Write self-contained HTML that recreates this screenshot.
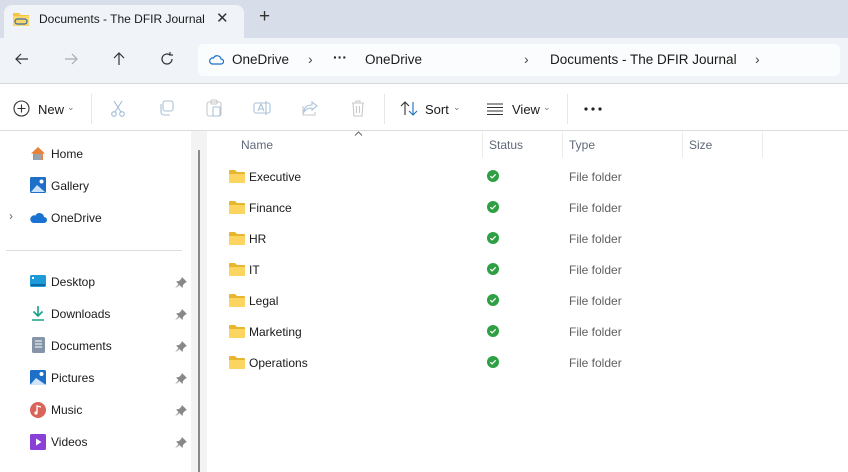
<!DOCTYPE html>
<html><head><meta charset="utf-8"><style>
*{margin:0;padding:0;box-sizing:border-box}
body{width:848px;height:472px;overflow:hidden;background:#fff;font-family:"Segoe UI","Liberation Sans",sans-serif;font-size:12px;color:#1a1a1a;position:relative}
.abs{position:absolute}
.tabs{left:0;top:0;width:848px;height:38px;background:#d8dee9}
.tab{left:4px;top:5px;width:240px;height:34px;background:#f0f3f8;border-radius:8px 8px 0 0}
.addr{left:0;top:38px;width:848px;height:46px;background:#f0f3f8;border-bottom:1px solid #d8d8d8}
.box{left:198px;top:44px;width:642px;height:32px;background:#fbfcfd;border-radius:5px}
.t{position:absolute;white-space:nowrap}
.sep{position:absolute;width:1px;background:#e6e6e6}
.hd{color:#606878;font-size:12px}
.gray{color:#5f5f5f}
.pin{position:absolute;left:175px}
</style></head><body>
<div class="abs tabs"></div>
<div class="abs tab"></div>
<svg class="abs" style="left:12px;top:11px" width="18" height="16" viewBox="0 0 18 16"><path d="M1 2h6l2 2h8v11H1z" fill="#f3c744"/><path d="M1 5h16v10H1z" fill="#fad66b"/><rect x="3" y="8" width="12" height="5" rx="2.5" fill="none" stroke="#3b6ea8" stroke-width="1.2"/></svg>
<div class="t" style="left:39px;top:12px;font-size:12px">Documents - The DFIR Journal</div>
<div class="t" style="left:216px;top:9px;font-size:15px;color:#333">✕</div>
<div class="t" style="left:259px;top:6px;font-size:19px;color:#333">+</div>
<div class="abs addr"></div>
<div class="abs box"></div>
<svg class="abs" style="left:14px;top:51px" width="16" height="16" viewBox="0 0 16 16" fill="none" stroke="#333" stroke-width="1.2"><path d="M14 8H2M7 3L2 8l5 5"/></svg>
<svg class="abs" style="left:63px;top:51px" width="16" height="16" viewBox="0 0 16 16" fill="none" stroke="#aaa" stroke-width="1.2"><path d="M2 8h12M9 3l5 5-5 5"/></svg>
<svg class="abs" style="left:111px;top:51px" width="16" height="16" viewBox="0 0 16 16" fill="none" stroke="#333" stroke-width="1.2"><path d="M8 14V2M3 7l5-5 5 5"/></svg>
<svg class="abs" style="left:159px;top:51px" width="16" height="16" viewBox="0 0 16 16" fill="none" stroke="#333" stroke-width="1.2"><path d="M13 8a5 5 0 1 1-2-4M11 1v3h3"/></svg>
<svg class="abs" style="left:208px;top:53px" width="16" height="12" viewBox="0 0 16 12" fill="none" stroke="#1a6fc4" stroke-width="1.2"><path d="M4 11h9a2.5 2.5 0 0 0 0-5 4 4 0 0 0-7.5-1A3 3 0 0 0 4 11z"/></svg>
<div class="t" style="left:232px;top:52px;font-size:13.5px">OneDrive</div>
<div class="t" style="left:308px;top:51px;font-size:14px;color:#444">›</div>
<div class="t" style="left:333px;top:49px;font-size:14px;font-weight:bold">···</div>
<div class="t" style="left:365px;top:52px;font-size:13.5px">OneDrive</div>
<div class="t" style="left:524px;top:51px;font-size:14px;color:#444">›</div>
<div class="t" style="left:550px;top:52px;font-size:13.5px">Documents - The DFIR Journal</div>
<div class="t" style="left:755px;top:51px;font-size:14px;color:#444">›</div>
<svg class="abs" style="left:13px;top:100px" width="17" height="17" viewBox="0 0 17 17" fill="none" stroke="#333" stroke-width="1.1"><circle cx="8.5" cy="8.5" r="7.5"/><path d="M8.5 4.5v8M4.5 8.5h8"/></svg>
<div class="t" style="left:38px;top:102px;font-size:13px">New</div>
<div class="t" style="left:67px;top:102px;font-size:9px;color:#777">⌄</div>
<div class="sep" style="left:91px;top:94px;height:30px"></div>
<svg class="abs" style="left:110px;top:100px" width="16" height="17" viewBox="0 0 16 17" fill="none" stroke="#9fbbd6" stroke-width="1.1"><circle cx="4" cy="14" r="2.3"/><circle cx="12" cy="14" r="2.3"/><path d="M5 12L12 1M11 12L4 1"/></svg>
<svg class="abs" style="left:158px;top:100px" width="16" height="16" viewBox="0 0 16 16" fill="none" stroke="#aac2da" stroke-width="1.1"><rect x="5" y="1" width="10" height="10" rx="2"/><path d="M3 4v8a3 3 0 0 0 3 3h6"/></svg>
<svg class="abs" style="left:206px;top:99px" width="16" height="18" viewBox="0 0 16 18" fill="none" stroke="#c8c8c8" stroke-width="1.1"><rect x="1" y="3" width="14" height="14" rx="2"/><rect x="5" y="1" width="6" height="4" rx="1"/><rect x="7" y="8" width="7" height="9" rx="1" stroke="#aac2da"/></svg>
<svg class="abs" style="left:253px;top:100px" width="18" height="16" viewBox="0 0 18 16" fill="none" stroke="#aac2da" stroke-width="1.1"><rect x="1" y="3" width="16" height="10" rx="2"/><path d="M5 11l3-7 3 7M6 9h4M13 1v14"/></svg>
<svg class="abs" style="left:302px;top:100px" width="16" height="16" viewBox="0 0 16 16" fill="none" stroke="#aac2da" stroke-width="1.1"><path d="M10 2l5 4-5 4V8c-4 0-6 1-8 4 0-5 3-7 8-7z"/><path d="M1 6v9h12v-3" stroke="#c8c8c8"/></svg>
<svg class="abs" style="left:351px;top:100px" width="14" height="17" viewBox="0 0 14 17" fill="none" stroke="#c8c8c8" stroke-width="1.1"><path d="M1 3h12M5 3V1h4v2M2 3l1 13h8l1-13M5.5 6v7M8.5 6v7"/></svg>
<div class="sep" style="left:384px;top:94px;height:30px"></div>
<svg class="abs" style="left:400px;top:101px" width="18" height="15" viewBox="0 0 18 15" fill="none" stroke-width="1.1"><path d="M5 14V1M1 5l4-4 4 4" stroke="#333"/><path d="M13 1v13M9 10l4 4 4-4" stroke="#1a6fc4"/></svg>
<div class="t" style="left:425px;top:102px;font-size:13px">Sort</div>
<div class="t" style="left:453px;top:102px;font-size:9px;color:#777">⌄</div>
<svg class="abs" style="left:487px;top:103px" width="16" height="12" viewBox="0 0 16 12" stroke="#333" stroke-width="1"><path d="M0 1h16M0 4.5h16M0 8h16M0 11.5h16"/></svg>
<div class="t" style="left:512px;top:102px;font-size:13px">View</div>
<div class="t" style="left:543px;top:102px;font-size:9px;color:#777">⌄</div>
<div class="sep" style="left:567px;top:94px;height:30px"></div>
<svg class="abs" style="left:584px;top:107px" width="18" height="4" viewBox="0 0 18 4" fill="#222"><circle cx="2" cy="2" r="1.6"/><circle cx="9" cy="2" r="1.6"/><circle cx="16" cy="2" r="1.6"/></svg>
<div class="abs" style="left:0;top:130px;width:848px;height:1px;background:#dcdcdc"></div>
<div class="abs" style="left:191px;top:131px;width:16px;height:341px;background:#f3f3f3"></div>
<div class="abs" style="left:198px;top:150px;width:2px;height:322px;background:#8a8a8a"></div>
<div class="abs" style="left:6px;top:250px;width:176px;height:1px;background:#dcdcdc"></div>
<svg class="abs" style="left:30px;top:146px" width="16" height="15" viewBox="0 0 16 15"><path d="M8 1L1 7.5h2V14h10V7.5h2z" fill="#e8823a"/><path d="M4 8h8v6H4z" fill="#9aa3ad"/></svg>
<div class="t" style="left:51px;top:147px">Home</div>
<svg class="abs" style="left:30px;top:177px" width="16" height="16" viewBox="0 0 16 16"><rect x="0" y="0" width="16" height="16" rx="1.5" fill="#1d6fc8"/><path d="M1 15l6-7 8 7z" fill="#c9e2fa"/><circle cx="11.5" cy="4.5" r="2" fill="#fff"/></svg>
<div class="t" style="left:51px;top:179px">Gallery</div>
<div class="t" style="left:9px;top:209px;color:#666">›</div>
<svg class="abs" style="left:30px;top:212px" width="17" height="11" viewBox="0 0 17 11"><path d="M3 11h11a3 3 0 0 0 0-6 4.5 4.5 0 0 0-8.5-1.5A3.5 3.5 0 0 0 3 11z" fill="#1a73d0"/></svg>
<div class="t" style="left:51px;top:211px">OneDrive</div>
<svg class="abs" style="left:30px;top:275px" width="16" height="13" viewBox="0 0 16 13"><rect width="16" height="12" rx="1.5" fill="#1f9ad9"/><rect x="1" y="9" width="14" height="2" fill="#0e6aa6"/><rect x="2" y="2" width="2" height="2" fill="#fff"/></svg>
<div class="t" style="left:51px;top:275px">Desktop</div>
<svg class="abs" style="left:31px;top:305px" width="14" height="16" viewBox="0 0 14 16" fill="none" stroke="#16a085" stroke-width="1.6"><path d="M7 1v10M2.5 6.5L7 11l4.5-4.5M1 15h12"/></svg>
<div class="t" style="left:51px;top:307px">Downloads</div>
<svg class="abs" style="left:32px;top:337px" width="13" height="16" viewBox="0 0 13 16"><rect width="13" height="16" rx="1.5" fill="#8694a8"/><path d="M3 4h7M3 7h7M3 10h7" stroke="#fff" stroke-width="1"/></svg>
<div class="t" style="left:51px;top:339px">Documents</div>
<svg class="abs" style="left:30px;top:370px" width="16" height="15" viewBox="0 0 16 15"><rect width="16" height="15" rx="1.5" fill="#1d6fc8"/><path d="M0 15l6-7 10 7z" fill="#cfe5fb"/><circle cx="11.5" cy="4" r="2" fill="#fff"/></svg>
<div class="t" style="left:51px;top:371px">Pictures</div>
<svg class="abs" style="left:30px;top:402px" width="16" height="16" viewBox="0 0 16 16"><circle cx="8" cy="8" r="8" fill="#d9655a"/><path d="M7 11V4l4 1" stroke="#fff" stroke-width="1.3" fill="none"/><circle cx="6" cy="11" r="1.6" fill="#fff"/></svg>
<div class="t" style="left:51px;top:403px">Music</div>
<svg class="abs" style="left:30px;top:434px" width="16" height="16" viewBox="0 0 16 16"><rect width="16" height="16" rx="1.5" fill="#8a3fd6"/><path d="M6 4.5v7l5.5-3.5z" fill="#fff"/></svg>
<div class="t" style="left:51px;top:435px">Videos</div>
<svg class="pin" style="top:277px" width="12" height="12" viewBox="0 0 12 12" fill="#888"><path d="M7 0l5 5-1.5.5L8 8l-.5 3L1 4.5l3-.5L6.5 1.5z M3.5 7L0 11.5 4.5 8z"/></svg>
<svg class="pin" style="top:309px" width="12" height="12" viewBox="0 0 12 12" fill="#888"><path d="M7 0l5 5-1.5.5L8 8l-.5 3L1 4.5l3-.5L6.5 1.5z M3.5 7L0 11.5 4.5 8z"/></svg>
<svg class="pin" style="top:341px" width="12" height="12" viewBox="0 0 12 12" fill="#888"><path d="M7 0l5 5-1.5.5L8 8l-.5 3L1 4.5l3-.5L6.5 1.5z M3.5 7L0 11.5 4.5 8z"/></svg>
<svg class="pin" style="top:373px" width="12" height="12" viewBox="0 0 12 12" fill="#888"><path d="M7 0l5 5-1.5.5L8 8l-.5 3L1 4.5l3-.5L6.5 1.5z M3.5 7L0 11.5 4.5 8z"/></svg>
<svg class="pin" style="top:405px" width="12" height="12" viewBox="0 0 12 12" fill="#888"><path d="M7 0l5 5-1.5.5L8 8l-.5 3L1 4.5l3-.5L6.5 1.5z M3.5 7L0 11.5 4.5 8z"/></svg>
<svg class="pin" style="top:437px" width="12" height="12" viewBox="0 0 12 12" fill="#888"><path d="M7 0l5 5-1.5.5L8 8l-.5 3L1 4.5l3-.5L6.5 1.5z M3.5 7L0 11.5 4.5 8z"/></svg>
<div class="t hd" style="left:241px;top:138px">Name</div>
<svg class="abs" style="left:354px;top:131px" width="9" height="5" viewBox="0 0 9 5" fill="none" stroke="#666"><path d="M1 4.5L4.5 1 8 4.5"/></svg>
<div class="sep" style="left:482px;top:132px;height:26px;background:#ececec"></div>
<div class="t hd" style="left:489px;top:138px">Status</div>
<div class="sep" style="left:562px;top:132px;height:26px;background:#ececec"></div>
<div class="t hd" style="left:569px;top:138px">Type</div>
<div class="sep" style="left:682px;top:132px;height:26px;background:#ececec"></div>
<div class="t hd" style="left:689px;top:138px">Size</div>
<div class="sep" style="left:762px;top:132px;height:26px;background:#ececec"></div>
<div id="rows"></div>
<script>
var n=["Executive","Finance","HR","IT","Legal","Marketing","Operations"],h="";
n.forEach(function(s,i){var y=170+i*31;
h+='<svg class="abs" style="left:229px;top:'+y+'px" width="16" height="13" viewBox="0 0 16 13"><path d="M0 1a1 1 0 0 1 1-1h5l2 2h7a1 1 0 0 1 1 1v9a1 1 0 0 1-1 1H1a1 1 0 0 1-1-1z" fill="#e8b52e"/><path d="M0 4h16v8a1 1 0 0 1-1 1H1a1 1 0 0 1-1-1z" fill="#fcd561"/></svg>';
h+='<div class="t" style="left:249px;top:'+y+'px">'+s+'</div>';
h+='<svg class="abs" style="left:487px;top:'+y+'px" width="12" height="12" viewBox="0 0 12 12"><circle cx="6" cy="6" r="6" fill="#2ea043"/><path d="M3.3 6.2l1.8 1.7 3.6-3.6" stroke="#fff" stroke-width="1.3" fill="none"/></svg>';
h+='<div class="t gray" style="left:569px;top:'+y+'px">File folder</div>';});
document.getElementById("rows").innerHTML=h;
</script>
</body></html>
